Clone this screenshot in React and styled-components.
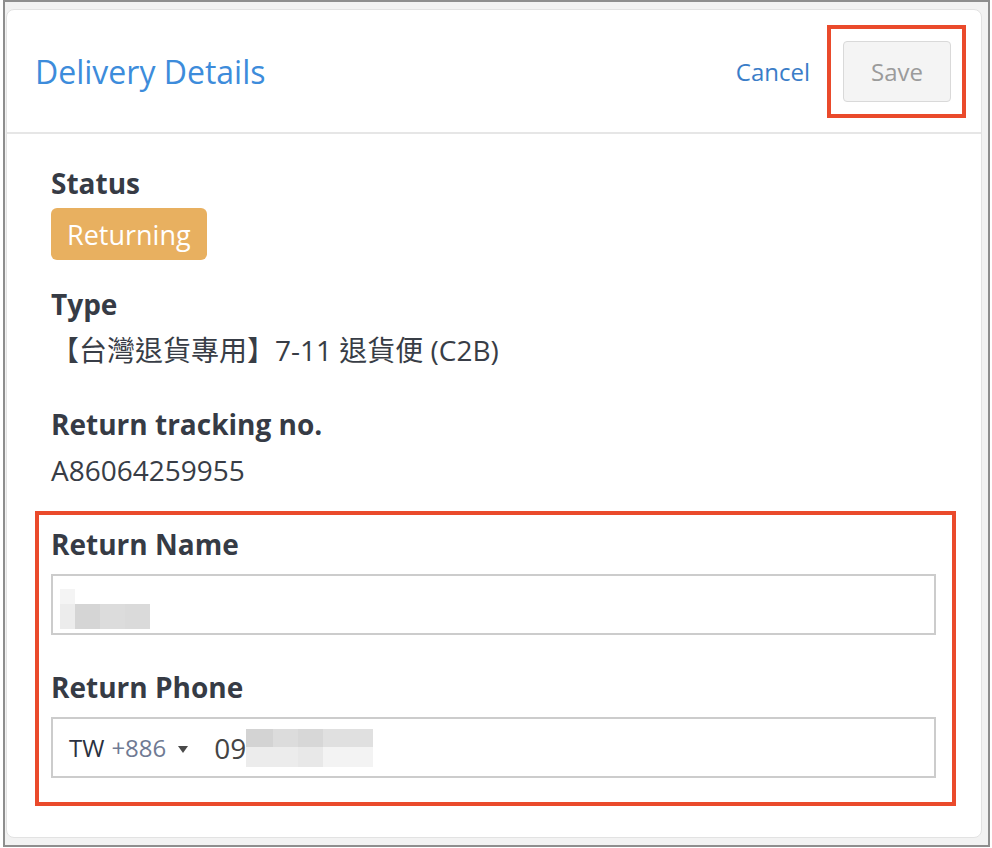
import React from "react";
import styled, { createGlobalStyle } from "styled-components";

const GlobalStyle = createGlobalStyle`
  body {
    margin: 0;
    background: #ffffff;
    font-family: "Open Sans", "Noto Sans CJK TC", sans-serif;
  }
`;

const Frame = styled.div`
  box-sizing: border-box;
  margin-left: 3px;
  width: 987px;
  height: 847px;
  border: 2px solid #8e8e8e;
  background: #f2f2f2;
  padding: 7px 0 0 1px;
`;

const Card = styled.div`
  width: 976px;
  box-sizing: border-box;
  background: #ffffff;
  border: 1px solid #e2e2e2;
  border-radius: 8px;
  display: flex;
  flex-direction: column;
`;

const Header = styled.header`
  display: flex;
  align-items: center;
  justify-content: space-between;
  padding: 15px 15px 14px 28px;
  border-bottom: 2px solid #e6e6e6;
`;

const Title = styled.h1`
  margin: 0;
  font-size: 32px;
  font-weight: 400;
  color: #3d8cdb;
`;

const Actions = styled.div`
  display: flex;
  align-items: center;
  gap: 17px;
`;

const LinkButton = styled.button`
  border: none;
  background: none;
  padding: 0;
  font-family: inherit;
  font-size: 24px;
  color: #3a7dc8;
  cursor: pointer;
`;

// red annotation frame from the reference
const Mark = styled.div`
  border: 4px solid #ea4a2b;
  padding: ${(p) => p.$pad};
  margin: ${(p) => p.$margin || "0"};
`;

const SaveButton = styled.button`
  width: 108px;
  height: 61px;
  box-sizing: border-box;
  border: 1px solid #d9d9d9;
  border-radius: 4px;
  background: #f4f4f4;
  font-family: inherit;
  font-size: 24px;
  color: #9b9b9b;
`;

const Body = styled.div`
  display: flex;
  flex-direction: column;
  gap: 27px;
  padding: 32px 45px 31px 44px;
`;

const Field = styled.div`
  display: flex;
  flex-direction: column;
  align-items: flex-start;
  gap: ${(p) => p.$gap}px;
`;

const Label = styled.div`
  font-size: 28px;
  font-weight: 700;
  line-height: 34px;
  color: #363b45;
`;

const Value = styled.div`
  font-size: 28px;
  line-height: 38px;
  color: #383d46;
  margin-bottom: 11px;
`;

const Badge = styled.span`
  display: inline-flex;
  align-items: center;
  height: 52px;
  padding: 0 16px;
  border-radius: 6px;
  background: #e8b060;
  color: #ffffff;
  font-size: 27px;
`;

const InputBox = styled.div`
  align-self: stretch;
  box-sizing: border-box;
  height: ${(p) => p.$h}px;
  border: 2px solid #cccccc;
  display: flex;
  align-items: center;
  padding-left: ${(p) => p.$pl}px;
`;

const Country = styled.span`
  font-size: 24px;
  color: #2b3140;
`;

const Dial = styled.span`
  font-size: 24px;
  color: #6f7a93;
  margin-left: 7px;
`;

const Caret = styled.span`
  width: 0;
  height: 0;
  border-left: 5.5px solid transparent;
  border-right: 5.5px solid transparent;
  border-top: 7px solid #4a4a4a;
  margin: 3px 0 0 12px;
`;

const Phone = styled.span`
  font-size: 28px;
  color: #444;
  margin-left: 26px;
`;

function Mosaic({ cells, width, height, style }) {
  return (
    <svg width={width} height={height} style={style}>
      {cells.map(([x, y, w, h, c], i) => (
        <rect key={i} x={x} y={y} width={w} height={h} fill={c} />
      ))}
    </svg>
  );
}

// blurred-out personal data
const nameCells = [
  [0, 0, 15, 15, "#f4f4f4"],
  [0, 15, 15, 25, "#ececec"],
  [15, 15, 25, 25, "#d5d5d5"],
  [40, 15, 25, 25, "#dcdcdc"],
  [65, 15, 25, 25, "#dadada"],
];

const phoneCells = [
  [0, 0, 27, 18, "#d3d3d3"],
  [27, 0, 25, 18, "#dcdcdc"],
  [52, 0, 25, 18, "#d7d7d7"],
  [77, 0, 50, 18, "#e0e0e0"],
  [0, 18, 27, 20, "#ececec"],
  [27, 18, 25, 20, "#ececec"],
  [52, 18, 25, 20, "#e8e8e8"],
  [77, 18, 50, 20, "#f3f3f3"],
];

export default function App() {
  return (
    <>
      <GlobalStyle />
      <Frame>
        <Card>
          <Header>
            <Title>Delivery Details</Title>
            <Actions>
              <LinkButton>Cancel</LinkButton>
              <Mark $pad="12px 11px 12px 12px">
                <SaveButton disabled>Save</SaveButton>
              </Mark>
            </Actions>
          </Header>
          <Body>
            <Field $gap={8}>
              <Label>Status</Label>
              <Badge>Returning</Badge>
            </Field>
            <Field $gap={10}>
              <Label>Type</Label>
              <Value>【台灣退貨專用】7-11 退貨便 (C2B)</Value>
            </Field>
            <Field $gap={10}>
              <Label>Return tracking no.</Label>
              <Value>A86064259955</Value>
            </Field>
            <Mark $pad="12px 16px 24px 12px" $margin="-16px -20px 0 -16px">
              <Field $gap={13}>
                <Label>Return Name</Label>
                <InputBox $h={61} $pl={7}>
                  <Mosaic cells={nameCells} width={90} height={40} style={{ marginTop: 8 }} />
                </InputBox>
              </Field>
              <Field $gap={13} style={{ marginTop: 35 }}>
                <Label>Return Phone</Label>
                <InputBox $h={61} $pl={16}>
                  <Country>TW</Country>
                  <Dial>+886</Dial>
                  <Caret />
                  <Phone>09</Phone>
                  <Mosaic cells={phoneCells} width={127} height={38} />
                </InputBox>
              </Field>
            </Mark>
          </Body>
        </Card>
      </Frame>
    </>
  );
}
